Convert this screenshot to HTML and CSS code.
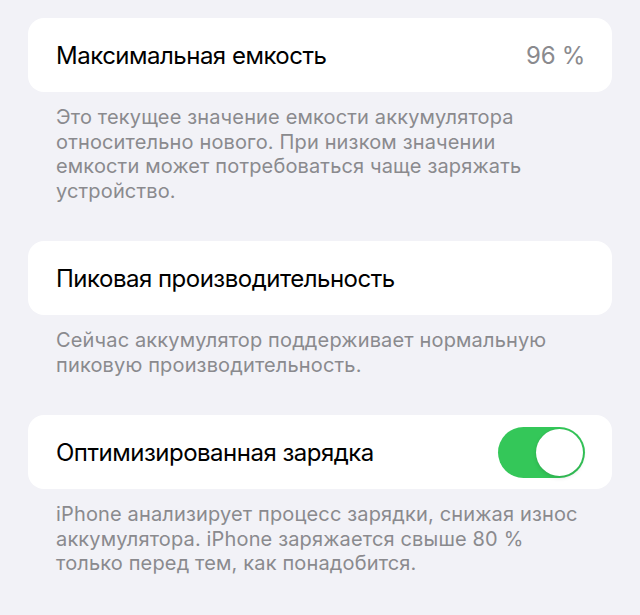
FILE: index.html
```html
<!DOCTYPE html>
<html lang="ru">
<head>
<meta charset="utf-8">
<link rel="stylesheet" href="styles.css">
</head>
<body>
<main class="page">
  <section class="group">
    <div class="card">
      <span class="title">Максимальная емкость</span>
      <span class="value">96 %</span>
    </div>
    <p class="note">Это текущее значение емкости аккумулятора<br>относительно нового. При низком значении<br>емкости может потребоваться чаще заряжать<br>устройство.</p>
  </section>
  <section class="group">
    <div class="card">
      <span class="title">Пиковая производительность</span>
    </div>
    <p class="note">Сейчас аккумулятор поддерживает нормальную<br>пиковую производительность.</p>
  </section>
  <section class="group">
    <div class="card">
      <span class="title">Оптимизированная зарядка</span>
      <span class="toggle on"><span class="knob"></span></span>
    </div>
    <p class="note">iPhone анализирует процесс зарядки, снижая износ<br>аккумулятора. iPhone заряжается свыше 80&nbsp;%<br>только перед тем, как понадобится.</p>
  </section>
</main>
</body>
</html>
```

FILE: styles.css
```css
html, body {
  margin: 0;
  padding: 0;
  background: #f2f2f7;
}
body {
  font-family: Inter, Roboto, "Noto Sans", "Liberation Sans", sans-serif;
  -webkit-font-smoothing: antialiased;
}
.page {
  padding: 18px 28px 0 28px;
  display: flex;
  flex-direction: column;
  gap: 38px;
}
.group {
  display: flex;
  flex-direction: column;
}
.card {
  background: #ffffff;
  border-radius: 16px;
  height: 74px;
  padding: 0 27px 0 28px;
  display: flex;
  align-items: center;
  justify-content: space-between;
  box-sizing: border-box;
}
.title {
  font-size: 24px;
  color: #000000;
  letter-spacing: -0.5px;
}
.value {
  font-size: 24px;
  color: #8a8a8e;
  letter-spacing: -0.3px;
}
.note {
  margin: 13px 0 0 0;
  padding: 0 20px 0 28px;
  font-size: 20px;
  line-height: 24.5px;
  color: #8a8a8e;
  letter-spacing: 0.15px;
  white-space: nowrap;
}
.toggle {
  width: 87px;
  height: 51px;
  border-radius: 26px;
  background: #34c759;
  box-sizing: border-box;
  padding: 2px;
  display: flex;
  justify-content: flex-end;
  align-items: center;
}
.knob {
  width: 47px;
  height: 47px;
  border-radius: 50%;
  background: #ffffff;
  box-shadow: 0 2px 4px rgba(0,0,0,0.12), 0 0 1px rgba(0,0,0,0.1);
}
```
